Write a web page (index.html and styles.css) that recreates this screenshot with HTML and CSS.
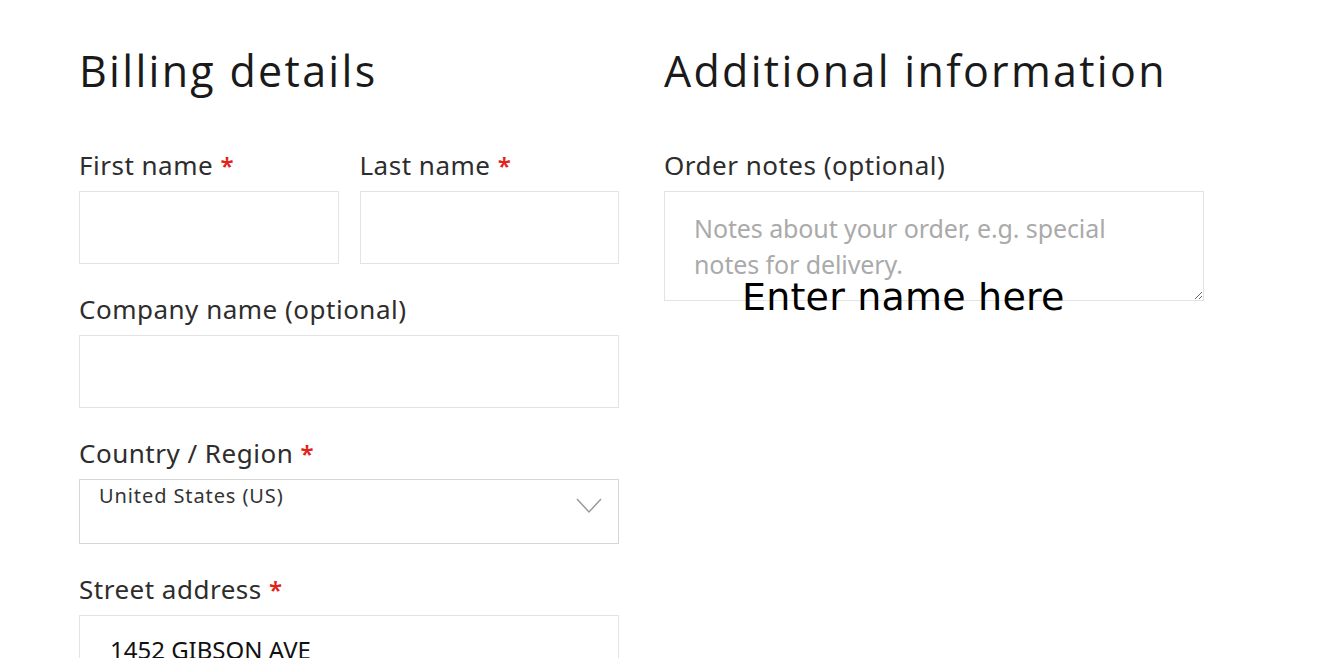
FILE: index.html
```html
<!DOCTYPE html>
<html lang="en">
<head>
<meta charset="utf-8">
<title>Checkout</title>
<link rel="stylesheet" href="styles.css">
</head>
<body>
<div class="page">
  <section class="col billing">
    <h2 class="heading">Billing details</h2>
    <div class="row two">
      <div class="field">
        <label class="label">First name <span class="req">*</span></label>
        <input class="input" type="text">
      </div>
      <div class="field">
        <label class="label">Last name <span class="req">*</span></label>
        <input class="input" type="text">
      </div>
    </div>
    <div class="field">
      <label class="label">Company name (optional)</label>
      <input class="input" type="text">
    </div>
    <div class="field">
      <label class="label">Country / Region <span class="req">*</span></label>
      <div class="select">
        <span class="select-value">United States (US)</span>
        <svg class="chevron" width="26" height="16" viewBox="0 0 26 16"><path d="M1 1 L13 14 L25 1" fill="none" stroke="#9a9a9a" stroke-width="1.5"/></svg>
      </div>
    </div>
    <div class="field">
      <label class="label">Street address <span class="req">*</span></label>
      <div class="input street"><span class="street-value">1452 GIBSON AVE</span></div>
    </div>
  </section>
  <section class="col additional">
    <h2 class="heading">Additional information</h2>
    <div class="field">
      <label class="label">Order notes (optional)</label>
      <div class="notes-wrap">
        <textarea class="notes" placeholder="Notes about your order, e.g. special notes for delivery."></textarea>
        <div class="overlay">Enter name here</div>
      </div>
    </div>
  </section>
</div>
</body>
</html>
```
FILE: styles.css
```css
html, body {
  margin: 0;
  padding: 0;
  background: #fff;
  overflow: hidden;
}
body {
  font-family: "Noto Sans", "Open Sans", sans-serif;
  color: #2b2b2b;
}
.page {
  display: flex;
  gap: 45px;
  padding: 43px 0 0 79px;
}
.col {
  width: 540px;
  display: flex;
  flex-direction: column;
}
.heading {
  margin: 0 0 50px 0;
  font-family: "Open Sans", "Noto Sans", sans-serif;
  font-weight: 400;
  font-size: 43px;
  line-height: 56px;
  letter-spacing: 2.3px;
  color: #1a1a1a;
}
.row.two {
  display: flex;
  gap: 21px;
}
.row.two .field {
  flex: 1;
}
.field {
  display: flex;
  flex-direction: column;
  margin-bottom: 29px;
}
.label {
  display: block;
  height: 32px;
  font-size: 26px;
  line-height: 32px;
  letter-spacing: 0.5px;
  margin-bottom: 10px;
  color: #2d2d2d;
}
.req {
  color: #e2231a;
  font-weight: 600;
  font-size: 24px;
  line-height: 0;
}
.input {
  box-sizing: border-box;
  height: 73px;
  border: 1px solid #e3e3e3;
  background: #fff;
  margin: 0;
  outline: none;
  font: inherit;
}
.select {
  box-sizing: border-box;
  height: 65px;
  border: 1px solid #d6d6d6;
  position: relative;
  padding: 2px 0 0 19px;
}
.select-value {
  font-size: 20px;
  letter-spacing: 0.9px;
  color: #333;
}
.chevron {
  position: absolute;
  right: 16px;
  top: 18px;
}
.street {
  padding: 17px 0 0 30px;
}
.street-value {
  font-size: 24px;
  color: #111;
  letter-spacing: 0px;
}
.notes-wrap {
  position: relative;
}
.notes {
  box-sizing: border-box;
  display: block;
  width: 540px;
  height: 110px;
  border: 1px solid #e3e3e3;
  padding: 18px 29px;
  font-family: "Noto Sans", "Open Sans", sans-serif;
  font-size: 25px;
  line-height: 36px;
  letter-spacing: -0.1px;
  color: #333;
  resize: vertical;
  outline: none;
}
.notes::placeholder {
  color: #aaaaaa;
}
.overlay {
  position: absolute;
  left: 78px;
  top: 84px;
  font-family: "DejaVu Sans", sans-serif;
  font-size: 38px;
  color: #000;
  letter-spacing: 0.2px;
  white-space: nowrap;
}
```
